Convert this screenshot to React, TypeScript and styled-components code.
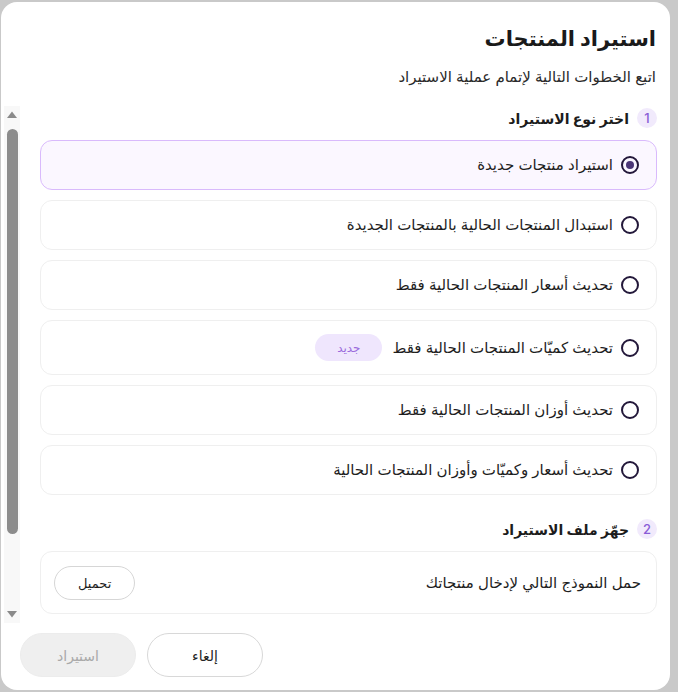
import React, { useState } from 'react';
import styled, { createGlobalStyle } from 'styled-components';

const GlobalStyle = createGlobalStyle`
  html, body {
    margin: 0;
    padding: 0;
    background: #c9c9c9;
  }
  body {
    font-family: Inter, "Noto Sans", "DejaVu Sans", sans-serif;
    color: #1c1c1c;
  }
  * {
    box-sizing: border-box;
  }
`;

const Backdrop = styled.div`
  width: 678px;
  height: 692px;
  padding: 2px 8px 2px 1px;
  background: #c9c9c9;
`;

const Dialog = styled.div`
  direction: rtl;
  width: 100%;
  height: 100%;
  background: #ffffff;
  border-radius: 16px;
  display: flex;
  flex-direction: column;
  overflow: hidden;
`;

const Header = styled.div`
  padding: 20px 14px 0 20px;
`;

const Title = styled.h1`
  margin: 0;
  font-size: 21px;
  font-weight: 700;
  line-height: 34px;
  color: #1a1a1a;
`;

const Subtitle = styled.p`
  margin: 10px 0 0;
  font-size: 15px;
  line-height: 22px;
  color: #2a2a2a;
`;

const Body = styled.div`
  display: flex;
  height: 517px;
  flex: none;
  margin: 18px 0 0 3px;
`;

const ScrollArea = styled.div`
  flex: 1;
  overflow: hidden;
  padding: 2px 13px 0 20px;
`;

const ScrollBar = styled.div`
  flex: none;
  width: 16px;
  display: flex;
  flex-direction: column;
  background: #f8f8f8;
`;

const ScrollButton = styled.div`
  height: 17px;
  display: flex;
  align-items: center;
  justify-content: center;
`;

const ScrollTrack = styled.div`
  flex: 1;
  padding: 6px 2.5px 0;
`;

const ScrollThumb = styled.div`
  width: 11px;
  border-radius: 6px;
  background: #8c8c8c;
`;

const Step = styled.section`
  display: flex;
  flex-direction: column;
  gap: 12px;
  margin-bottom: 24px;
`;

const StepHeader = styled.div`
  display: flex;
  align-items: center;
  gap: 8px;
  height: 20px;
  font-size: 14px;
  font-weight: 700;
  color: #1c1c1c;
`;

const StepNumber = styled.span`
  width: 20px;
  height: 20px;
  border-radius: 50%;
  background: #f1eafc;
  color: #8a5cd6;
  font-size: 13px;
  font-weight: 500;
  display: flex;
  align-items: center;
  justify-content: center;
`;

const OptionList = styled.div`
  display: flex;
  flex-direction: column;
  gap: 10px;
`;

const Option = styled.label<{ $selected: boolean }>`
  display: flex;
  align-items: center;
  gap: 8px;
  min-height: 50px;
  padding: 13px 17px;
  border-radius: 12px;
  border: 1px solid ${p => (p.$selected ? '#d9bafc' : '#efefef')};
  background: ${p => (p.$selected ? '#fbf7ff' : '#ffffff')};
  cursor: pointer;
  font-size: 15px;
  line-height: 20px;
  color: #1e1e1e;
`;

const Radio = styled.span<{ $checked: boolean }>`
  flex: none;
  width: 18px;
  height: 18px;
  border-radius: 50%;
  border: 2px solid #23183a;
  display: flex;
  align-items: center;
  justify-content: center;

  &::after {
    content: '';
    width: 8px;
    height: 8px;
    border-radius: 50%;
    background: ${p => (p.$checked ? '#4b3676' : 'transparent')};
  }
`;

const NewBadge = styled.span`
  margin-right: 2px;
  padding: 0 22px;
  height: 27px;
  border-radius: 14px;
  background: #efe6fd;
  color: #9a6bdc;
  font-size: 12px;
  display: flex;
  align-items: center;
`;

const FileCard = styled.div`
  display: flex;
  align-items: center;
  justify-content: space-between;
  min-height: 63px;
  padding: 0 15px 0 13px;
  border-radius: 12px;
  border: 1px solid #efefef;
  font-size: 15px;
  color: #1e1e1e;
`;

const OutlineButton = styled.button`
  height: 34px;
  padding: 0 23px;
  border-radius: 17px;
  border: 1px solid #d6d6d6;
  background: #ffffff;
  font-family: inherit;
  font-size: 13px;
  color: #1e1e1e;
  cursor: pointer;
`;

const Footer = styled.div`
  display: flex;
  justify-content: flex-end;
  gap: 11px;
  padding: 10px 14px 0 19px;
`;

const FooterButton = styled.button<{ $disabled?: boolean }>`
  width: 116px;
  height: 44px;
  border-radius: 22px;
  border: 1px solid ${p => (p.$disabled ? '#ececec' : '#d8d8d8')};
  background: ${p => (p.$disabled ? '#efefef' : '#ffffff')};
  color: ${p => (p.$disabled ? '#a9a9a9' : '#1e1e1e')};
  font-family: inherit;
  font-size: 14px;
  cursor: ${p => (p.$disabled ? 'default' : 'pointer')};
`;

const UploadZone = styled.div`
  height: 46px;
  border-radius: 12px;
  border: 1px dashed #dcdcdc;
  display: flex;
  align-items: center;
  justify-content: center;
  font-size: 14px;
  color: #777777;
`;

const Arrow = ({ down }: { down?: boolean }) => (
  <svg width="10" height="7" viewBox="0 0 10 7">
    <polygon points={down ? '0,0 10,0 5,6.5' : '0,7 10,7 5,0.5'} fill="#8a8a8a" />
  </svg>
);

const OPTIONS = [
  { id: 'new', label: 'استيراد منتجات جديدة' },
  { id: 'replace', label: 'استبدال المنتجات الحالية بالمنتجات الجديدة' },
  { id: 'prices', label: 'تحديث أسعار المنتجات الحالية فقط' },
  { id: 'quantities', label: 'تحديث كميّات المنتجات الحالية فقط', isNew: true },
  { id: 'weights', label: 'تحديث أوزان المنتجات الحالية فقط' },
  { id: 'all', label: 'تحديث أسعار وكميّات وأوزان المنتجات الحالية' },
];

const App = () => {
  const [selected, setSelected] = useState<string>('new');

  return (
    <>
      <GlobalStyle />
      <Backdrop>
        <Dialog>
          <Header>
            <Title>استيراد المنتجات</Title>
            <Subtitle>اتبع الخطوات التالية لإتمام عملية الاستيراد</Subtitle>
          </Header>
          <Body>
            <ScrollArea>
              <Step>
                <StepHeader>
                  <StepNumber>1</StepNumber>
                  اختر نوع الاستيراد
                </StepHeader>
                <OptionList>
                  {OPTIONS.map(option => (
                    <Option
                      key={option.id}
                      $selected={selected === option.id}
                      onClick={() => setSelected(option.id)}
                    >
                      <Radio $checked={selected === option.id} />
                      {option.label}
                      {option.isNew && <NewBadge>جديد</NewBadge>}
                    </Option>
                  ))}
                </OptionList>
              </Step>
              <Step>
                <StepHeader>
                  <StepNumber>2</StepNumber>
                  جهّز ملف الاستيراد
                </StepHeader>
                <FileCard>
                  حمل النموذج التالي لإدخال منتجاتك
                  <OutlineButton>تحميل</OutlineButton>
                </FileCard>
              </Step>
              <Step>
                <StepHeader>
                  <StepNumber>3</StepNumber>
                  ارفع ملف الاستيراد
                </StepHeader>
                <UploadZone>اسحب الملف هنا أو اضغط للاختيار</UploadZone>
              </Step>
            </ScrollArea>
            <ScrollBar>
              <ScrollButton>
                <Arrow />
              </ScrollButton>
              <ScrollTrack>
                <ScrollThumb style={{ height: 405 }} />
              </ScrollTrack>
              <ScrollButton>
                <Arrow down />
              </ScrollButton>
            </ScrollBar>
          </Body>
          <Footer>
            <FooterButton>إلغاء</FooterButton>
            <FooterButton $disabled>استيراد</FooterButton>
          </Footer>
        </Dialog>
      </Backdrop>
    </>
  );
};

export default App;
